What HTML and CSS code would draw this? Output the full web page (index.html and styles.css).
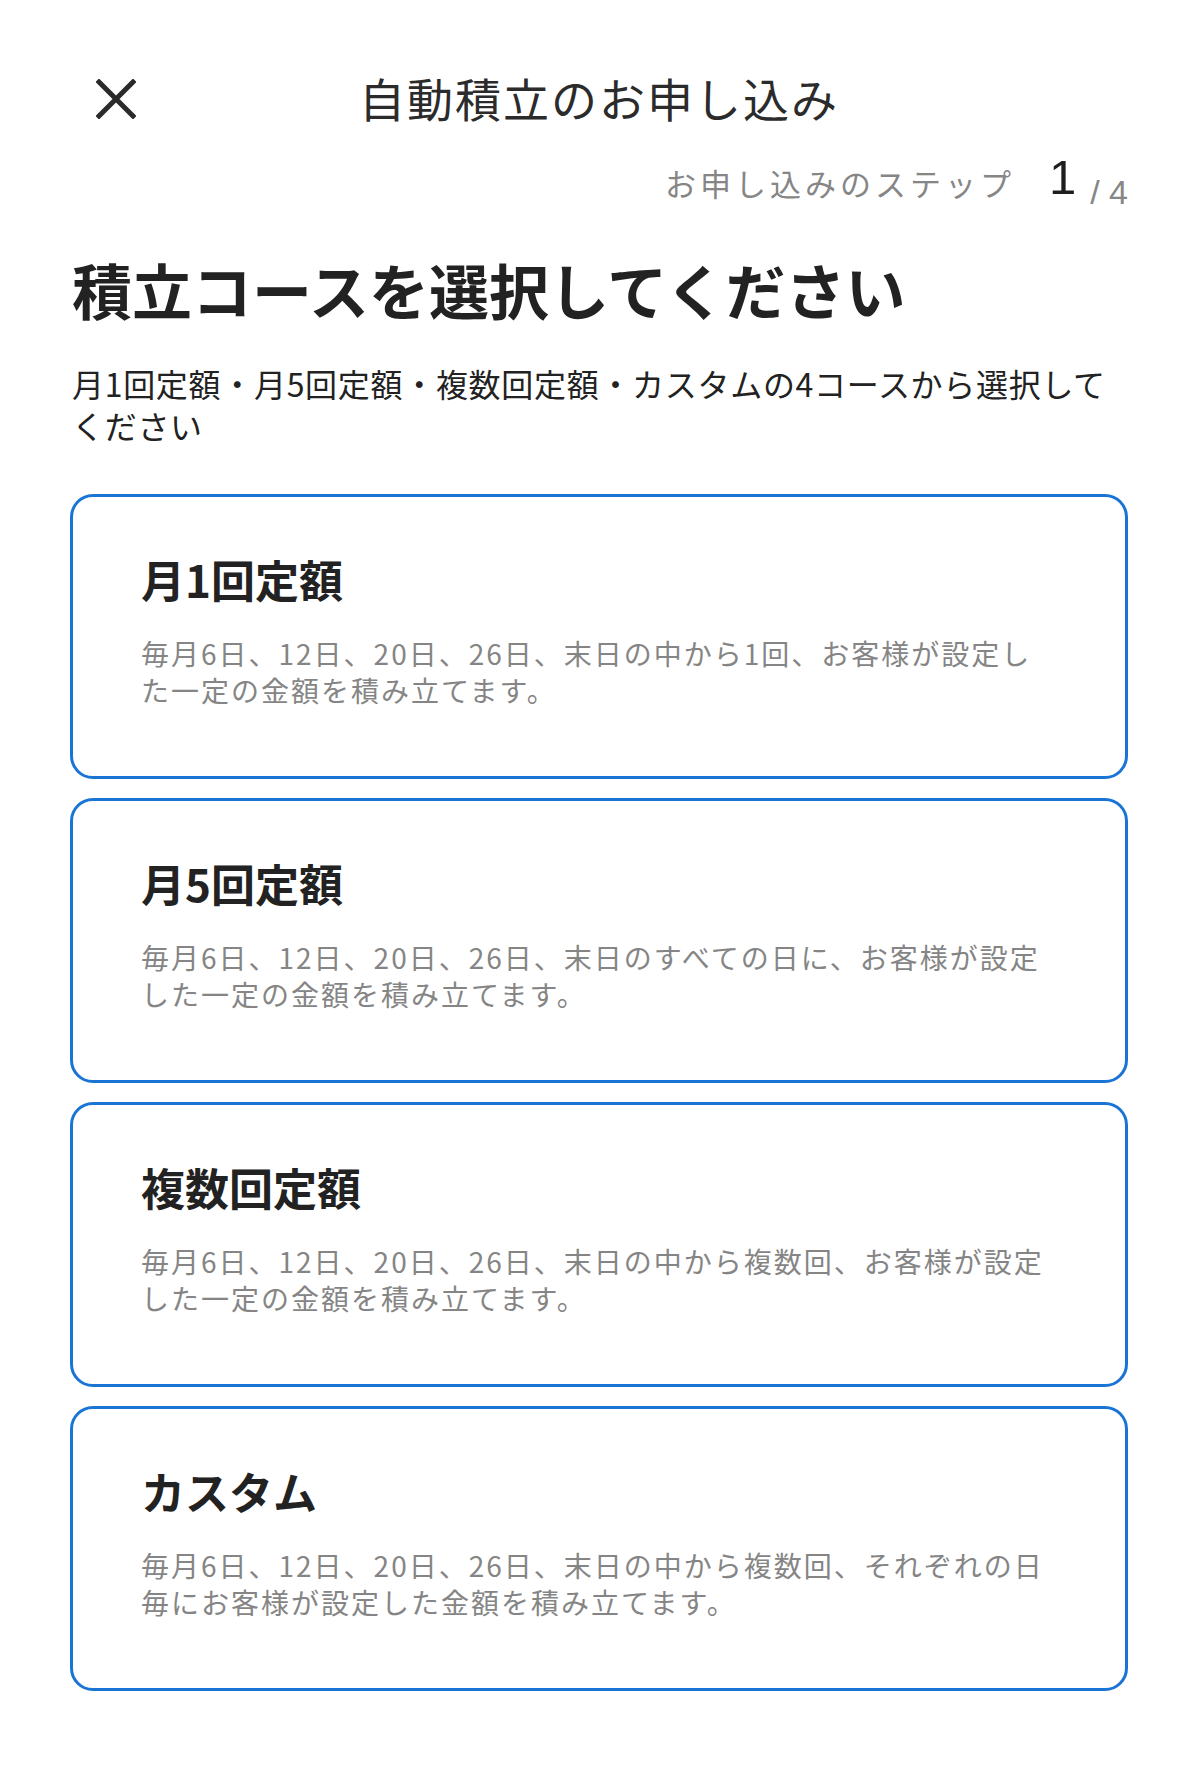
FILE: index.html
```html
<!DOCTYPE html>
<html lang="ja">
<head>
<meta charset="utf-8">
<title>自動積立のお申し込み</title>
<link rel="stylesheet" href="styles.css">
</head>
<body>
<div class="page">
  <header class="header">
    <button class="close" aria-label="閉じる">
      <svg viewBox="0 0 40 40" width="40" height="40"><path d="M3 3 L37 37 M37 3 L3 37" stroke="#2a2a2a" stroke-width="5" stroke-linecap="square" fill="none"/></svg>
    </button>
    <h1 class="title">自動積立のお申し込み</h1>
    <span class="spacer"></span>
  </header>
  <div class="step">
    <span class="step-label">お申し込みのステップ</span>
    <span class="step-cur">1</span>
    <span class="step-total">/ 4</span>
  </div>
  <h2 class="heading">積立コースを選択してください</h2>
  <p class="lead">月1回定額・月5回定額・複数回定額・カスタムの4コースから選択してください</p>
  <div class="cards">
    <div class="card">
      <h3 class="card-title">月1回定額</h3>
      <p class="card-desc">毎月6日、12日、20日、26日、末日の中から1回、お客様が設定した一定の金額を積み立てます。</p>
    </div>
    <div class="card">
      <h3 class="card-title">月5回定額</h3>
      <p class="card-desc">毎月6日、12日、20日、26日、末日のすべての日に、お客様が設定した一定の金額を積み立てます。</p>
    </div>
    <div class="card">
      <h3 class="card-title">複数回定額</h3>
      <p class="card-desc">毎月6日、12日、20日、26日、末日の中から複数回、お客様が設定した一定の金額を積み立てます。</p>
    </div>
    <div class="card">
      <h3 class="card-title">カスタム</h3>
      <p class="card-desc">毎月6日、12日、20日、26日、末日の中から複数回、それぞれの日毎にお客様が設定した金額を積み立てます。</p>
    </div>
  </div>
</div>
</body>
</html>
```

FILE: styles.css
```css
* { box-sizing: border-box; }
html, body { margin: 0; padding: 0; background: #ffffff; }
body {
  font-family: "Noto Sans CJK JP", "Noto Sans", sans-serif;
  color: #222222;
}
.page {
  width: 1200px;
  padding: 67px 72px 60px 70px;
}
.header {
  display: grid;
  grid-template-columns: 1fr auto 1fr;
  align-items: center;
  height: 60px;
}
.close {
  justify-self: start;
  margin-left: 26px;
  width: 40px;
  height: 40px;
  padding: 0;
  border: none;
  background: none;
  display: flex;
  position: relative;
  top: 2px;
}
.title {
  margin: 0;
  font-size: 46px;
  font-weight: 400;
  letter-spacing: 2px;
  line-height: 60px;
  color: #2b2b2b;
}
.step {
  display: flex;
  justify-content: flex-end;
  align-items: baseline;
  margin-top: 22px;
  margin-right: 0;
  height: 56px;
}
.step-label {
  font-size: 31px;
  letter-spacing: 4px;
  color: #868686;
  margin-right: 34px;
  position: relative;
  top: 2px;
}
.step-cur {
  font-family: "Liberation Sans", sans-serif;
  font-size: 49px;
  color: #1e1e1e;
  margin-right: 14px;
}
.step-total {
  font-family: "Liberation Sans", sans-serif;
  font-size: 34px;
  color: #868686;
  position: relative;
  top: 10px;
}
.heading {
  margin: 48px 0 0 2px;
  font-size: 60px;
  font-weight: 700;
  line-height: 72px;
  color: #222222;
}
.lead {
  margin: 37px 0 0 2px;
  font-size: 32px;
  letter-spacing: 0.7px;
  line-height: 42px;
  color: #222222;
}
.cards {
  display: flex;
  flex-direction: column;
  gap: 19px;
  margin-top: 48px;
}
.card {
  border: 3px solid #1a74d6;
  border-radius: 23px;
  height: 285px;
  padding: 56px 68px 0 68px;
}
.card-title {
  margin: 0;
  font-size: 44px;
  font-weight: 700;
  line-height: 52px;
  color: #222222;
}
.card-desc {
  margin: 30px 0 0 0;
  font-size: 28px;
  letter-spacing: 2px;
  line-height: 37px;
  color: #858585;
}
```
